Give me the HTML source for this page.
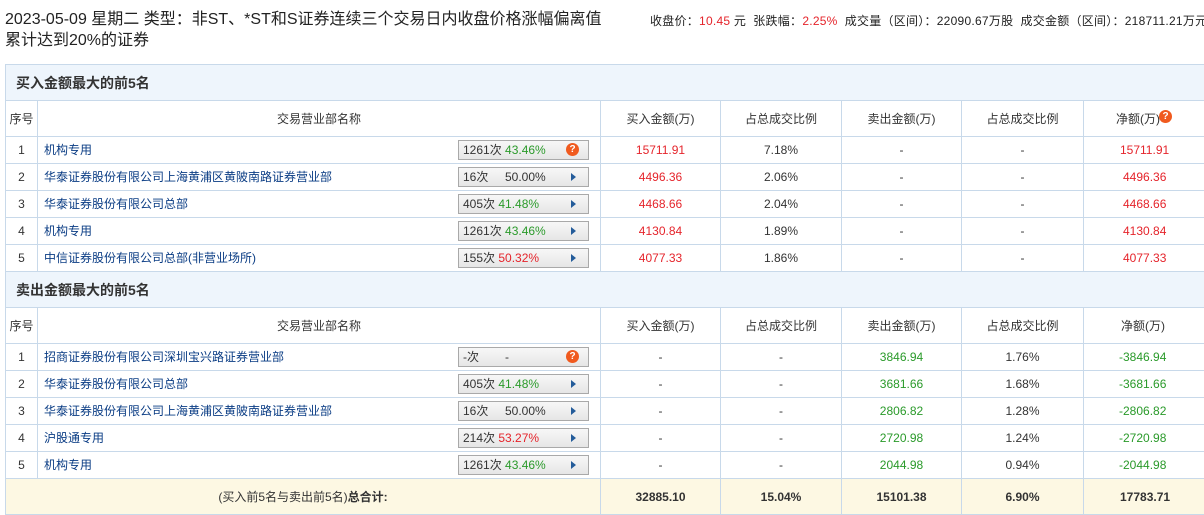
<!DOCTYPE html>
<html><head><meta charset="utf-8">
<style>
*{margin:0;padding:0;box-sizing:border-box}
body{width:1204px;height:515px;overflow:hidden;background:#fff;font-family:"Liberation Sans","Noto Sans CJK SC",sans-serif;font-size:12px;color:#333;position:relative}
.title{position:absolute;left:5px;top:9px;font-size:16px;line-height:21px;color:#222;width:640px;white-space:nowrap}
.info{position:absolute;left:650px;top:12px;font-size:12px;color:#222;white-space:nowrap;letter-spacing:0.25px}
.r{color:#e5242b}.g{color:#2a9a2a}
table{position:absolute;left:5px;border-collapse:collapse;table-layout:fixed;width:1230px}
td{border:1px solid #c8d9ea;height:27px;text-align:center;padding:0;white-space:nowrap}
tr.sec td{height:36px;background:#eef5fc;text-align:left;padding-left:10px;font-size:14px;font-weight:bold;color:#333}
tr.hd td{height:36px;color:#333}
td.nm{text-align:left;padding-left:6px;color:#0a3c84;position:relative;line-height:14px}
.bd{position:absolute;left:420px;top:3px;width:131px;height:20px;border:1px solid #a9a9a9;background:linear-gradient(#f7f7f7,#e6e6e6);color:#333;line-height:18px;padding-left:4px}
.bd .p{position:absolute;left:46px}
.bd .tri{position:absolute;right:12px;top:5px;width:0;height:0;border-left:5px solid #245c9a;border-top:4px solid transparent;border-bottom:4px solid transparent}
.q{display:inline-block;width:13px;height:13px;border-radius:50%;background:#f05a1e;color:#fff;font-size:10px;font-weight:bold;line-height:13px;text-align:center;vertical-align:middle}
.bd .q{position:absolute;right:9px;top:2px}
tr.tot td{background:#fdf8e3;height:36px;color:#333}
</style></head><body>
<div class="title">2023-05-09 星期二 类型：非ST、*ST和S证券连续三个交易日内收盘价格涨幅偏离值<br>累计达到20%的证券</div>
<div class="info">收盘价：<span class="r">10.45</span> 元&nbsp; 张跌幅：<span class="r">2.25%</span>&nbsp; 成交量（区间）：22090.67万股&nbsp; 成交金额（区间）：218711.21万元</div>

<table style="top:64px">
<colgroup><col style="width:32px"><col style="width:563px"><col style="width:120px"><col style="width:121px"><col style="width:120px"><col style="width:122px"><col style="width:152px"></colgroup>
<tr class="sec"><td colspan="7">买入金额最大的前5名</td></tr>
<tr class="hd"><td>序号</td><td>交易营业部名称</td><td>买入金额(万)</td><td>占总成交比例</td><td>卖出金额(万)</td><td>占总成交比例</td><td style="text-align:left;padding-left:32px">净额(万)<span class="q" style="vertical-align:top;margin-left:-1px">?</span></td></tr>
<tr><td>1</td><td class="nm">机构专用<div class="bd">1261次 <span class="g">43.46%</span><span class="q">?</span></div></td><td class="r">15711.91</td><td>7.18%</td><td>-</td><td>-</td><td class="r" style="text-align:left;padding-left:36px">15711.91</td></tr>
<tr><td>2</td><td class="nm">华泰证券股份有限公司上海黄浦区黄陂南路证券营业部<div class="bd">16次<span class="p">50.00%</span><span class="tri"></span></div></td><td class="r">4496.36</td><td>2.06%</td><td>-</td><td>-</td><td class="r" style="text-align:left;padding-left:39px">4496.36</td></tr>
<tr><td>3</td><td class="nm">华泰证券股份有限公司总部<div class="bd">405次 <span class="g">41.48%</span><span class="tri"></span></div></td><td class="r">4468.66</td><td>2.04%</td><td>-</td><td>-</td><td class="r" style="text-align:left;padding-left:39px">4468.66</td></tr>
<tr><td>4</td><td class="nm">机构专用<div class="bd">1261次 <span class="g">43.46%</span><span class="tri"></span></div></td><td class="r">4130.84</td><td>1.89%</td><td>-</td><td>-</td><td class="r" style="text-align:left;padding-left:39px">4130.84</td></tr>
<tr><td>5</td><td class="nm">中信证券股份有限公司总部(非营业场所)<div class="bd">155次 <span class="r">50.32%</span><span class="tri"></span></div></td><td class="r">4077.33</td><td>1.86%</td><td>-</td><td>-</td><td class="r" style="text-align:left;padding-left:39px">4077.33</td></tr>
<tr class="sec"><td colspan="7">卖出金额最大的前5名</td></tr>
<tr class="hd"><td>序号</td><td>交易营业部名称</td><td>买入金额(万)</td><td>占总成交比例</td><td>卖出金额(万)</td><td>占总成交比例</td><td style="text-align:left;padding-left:37px">净额(万)</td></tr>
<tr><td>1</td><td class="nm">招商证券股份有限公司深圳宝兴路证券营业部<div class="bd">-次<span class="p">-</span><span class="q">?</span></div></td><td>-</td><td>-</td><td class="g">3846.94</td><td>1.76%</td><td class="g" style="text-align:left;padding-left:35px">-3846.94</td></tr>
<tr><td>2</td><td class="nm">华泰证券股份有限公司总部<div class="bd">405次 <span class="g">41.48%</span><span class="tri"></span></div></td><td>-</td><td>-</td><td class="g">3681.66</td><td>1.68%</td><td class="g" style="text-align:left;padding-left:35px">-3681.66</td></tr>
<tr><td>3</td><td class="nm">华泰证券股份有限公司上海黄浦区黄陂南路证券营业部<div class="bd">16次<span class="p">50.00%</span><span class="tri"></span></div></td><td>-</td><td>-</td><td class="g">2806.82</td><td>1.28%</td><td class="g" style="text-align:left;padding-left:35px">-2806.82</td></tr>
<tr><td>4</td><td class="nm">沪股通专用<div class="bd">214次 <span class="r">53.27%</span><span class="tri"></span></div></td><td>-</td><td>-</td><td class="g">2720.98</td><td>1.24%</td><td class="g" style="text-align:left;padding-left:35px">-2720.98</td></tr>
<tr><td>5</td><td class="nm">机构专用<div class="bd">1261次 <span class="g">43.46%</span><span class="tri"></span></div></td><td>-</td><td>-</td><td class="g">2044.98</td><td>0.94%</td><td class="g" style="text-align:left;padding-left:35px">-2044.98</td></tr>
<tr class="tot"><td colspan="2">(买入前5名与卖出前5名)<b>总合计:</b></td><td class="r"><b>32885.10</b></td><td><b>15.04%</b></td><td class="g"><b>15101.38</b></td><td><b>6.90%</b></td><td class="r" style="text-align:left;padding-left:36px"><b>17783.71</b></td></tr>
</table>
</body></html>
